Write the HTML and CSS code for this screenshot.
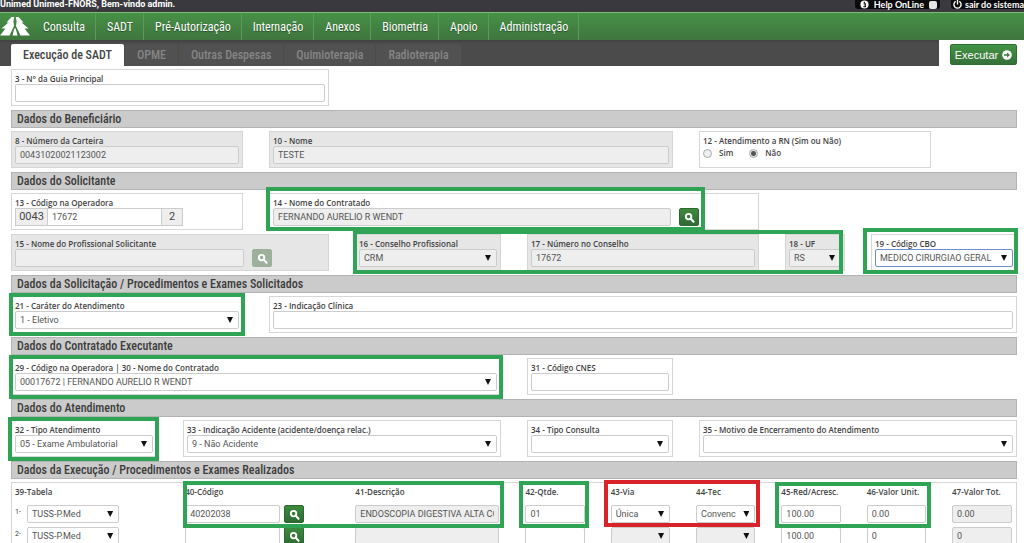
FILE: index.html
```html
<!DOCTYPE html>
<html lang="pt-BR">
<head>
<meta charset="utf-8">
<meta name="viewport" content="width=device-width, initial-scale=1">
<title>Execução de SADT</title>
<link rel="stylesheet" href="styles.css">
</head>
<body>
<svg class="sprite" aria-hidden="true">
  <symbol id="search" viewBox="0 0 12 12"><circle cx="5" cy="5" r="3" fill="none" stroke="currentColor" stroke-width="2"/><path d="M7.4 7.4 10.4 10.6" stroke="currentColor" stroke-width="2.2" stroke-linecap="round"/></symbol>
</svg>

<header class="topbar">
  <span class="welcome">Unimed Unimed-FNORS, Bem-vindo admin.</span>
  <div class="top-actions">
    <button class="top-button" type="button">
      <svg class="top-icon" viewBox="0 0 10 10" aria-hidden="true"><circle cx="5" cy="5" r="4.5" fill="#fff"/><path d="M4 4.2h1.800v3M3.700 7.500h3M4.800 2v1.200" stroke="#000" stroke-width="1.3" fill="none"/></svg>
      Help OnLine
      <span class="top-square"></span>
    </button>
    <button class="top-button top-exit" type="button">
      <svg class="top-icon" viewBox="0 0 10 10" aria-hidden="true"><path d="M3 1.6a4 4 0 1 0 4 0M5 0v5" stroke="#fff" stroke-width="1.5" fill="none"/></svg>
      sair do sistema
    </button>
  </div>
</header>

<nav class="menu">
  <svg class="logo" viewBox="0 0 30 19" aria-label="Unimed" role="img"><path fill="#fff" d="M11.500 0H14.200L13.400 4.500 14 9 9.500 18.500H0L5.500 11.500H1.500L8.500 5.500H6.500ZM15.800 0H18.500L23.500 5.500H21.500L28.500 11.500H24.500L30 18.500H20.500L16 9 16.600 4.500Z"/><path fill="#fff" d="M14.300 11.500H15.700L17.500 18.500H12.500Z"/></svg>
  <a href="#">Consulta</a>
  <a href="#">SADT</a>
  <a href="#">Pré-Autorização</a>
  <a href="#">Internação</a>
  <a href="#">Anexos</a>
  <a href="#">Biometria</a>
  <a href="#">Apoio</a>
  <a href="#">Administração</a>
</nav>

<div class="tabbar">
  <div class="tabs">
    <button class="tab active" type="button">Execução de SADT</button>
    <button class="tab" type="button">OPME</button>
    <button class="tab" type="button">Outras Despesas</button>
    <button class="tab" type="button">Quimioterapia</button>
    <button class="tab" type="button">Radioterapia</button>
  </div>
  <div class="run-area">
    <button class="run" type="button">Executar
      <svg class="run-icon" viewBox="0 0 10 10" aria-hidden="true"><circle cx="5" cy="5" r="4.800" fill="#fff"/><path d="M2 4.200h3V2.400L8 5 5 7.600V5.800H2Z" fill="#3d7e3d"/></svg>
    </button>
  </div>
</div>

<main class="form">
  <div class="row">
    <div class="field span-4"><label for="f3">3 - N° da Guia Principal</label><input id="f3" type="text"></div>
  </div>

  <h2>Dados do Beneficiário</h2>
  <div class="row">
    <div class="field locked span-3"><label for="f8">8 - Número da Carteira</label><input id="f8" type="text" value="00431020021123002" readonly></div>
    <div class="field locked span-5"><label for="f10">10 - Nome</label><input id="f10" type="text" value="TESTE" readonly></div>
    <fieldset class="field span-3">
      <legend>12 - Atendimento a RN (Sim ou Não)</legend>
      <div class="radios">
        <label><input type="radio" name="rn">Sim</label>
        <label><input type="radio" name="rn" checked>Não</label>
      </div>
    </fieldset>
  </div>

  <h2>Dados do Solicitante</h2>
  <div class="row">
    <div class="field span-3">
      <label for="f13">13 - Código na Operadora</label>
      <div class="group"><span class="addon">0043</span><input id="f13" type="text" value="17672"><span class="addon addon-end">2</span></div>
    </div>
    <div class="field span-6">
      <label for="f14">14 - Nome do Contratado</label>
      <div class="with-search name-search"><input id="f14" type="text" value="FERNANDO AURELIO R WENDT" readonly><button class="search" type="button" aria-label="Buscar"><svg><use href="#search"/></svg></button></div>
    </div>
    <span class="mark mark-name"></span>
  </div>
  <div class="row">
    <div class="field locked span-4">
      <label for="f15">15 - Nome do Profissional Solicitante</label>
      <div class="with-search prof-search"><input id="f15" type="text" readonly><button class="search off" type="button" aria-label="Buscar" disabled><svg><use href="#search"/></svg></button></div>
    </div>
    <div class="field locked span-2"><label for="f16">16 - Conselho Profissional</label><span class="pick"><select id="f16"><option>CRM</option></select></span></div>
    <div class="field locked span-3"><label for="f17">17 - Número no Conselho</label><input id="f17" type="text" value="17672" readonly></div>
    <div class="field locked span-1"><label for="f18">18 - UF</label><span class="pick"><select id="f18"><option>RS</option></select></span></div>
    <div class="field span-2"><label for="f19">19 - Código CBO</label><span class="pick focused"><select id="f19"><option>MEDICO CIRURGIAO GERAL</option></select></span></div>
    <span class="mark mark-council"></span>
    <span class="mark mark-cbo"></span>
  </div>

  <h2>Dados da Solicitação / Procedimentos e Exames Solicitados</h2>
  <div class="row">
    <div class="field span-3"><label for="f21">21 - Caráter do Atendimento</label><span class="pick"><select id="f21"><option>1 - Eletivo</option></select></span></div>
    <div class="field span-9"><label for="f23">23 - Indicação Clínica</label><input id="f23" type="text"></div>
    <span class="mark mark-3"></span>
  </div>

  <h2>Dados do Contratado Executante</h2>
  <div class="row">
    <div class="field span-6"><label for="f29">29 - Código na Operadora | 30 - Nome do Contratado</label><span class="pick"><select id="f29"><option>00017672 | FERNANDO AURELIO R WENDT</option></select></span></div>
    <div class="field span-2"><label for="f31">31 - Código CNES</label><input id="f31" type="text"></div>
    <span class="mark mark-6"></span>
  </div>

  <h2>Dados do Atendimento</h2>
  <div class="row">
    <div class="field span-2"><label for="f32">32 - Tipo Atendimento</label><span class="pick"><select id="f32"><option>05 - Exame Ambulatorial</option></select></span></div>
    <div class="field span-4"><label for="f33">33 - Indicação Acidente (acidente/doença relac.)</label><span class="pick"><select id="f33"><option>9 - Não Acidente</option></select></span></div>
    <div class="field span-2"><label for="f34">34 - Tipo Consulta</label><span class="pick"><select id="f34"><option></option></select></span></div>
    <div class="field span-4"><label for="f35">35 - Motivo de Encerramento do Atendimento</label><span class="pick"><select id="f35"><option></option></select></span></div>
    <span class="mark mark-2"></span>
  </div>

  <h2>Dados da Execução / Procedimentos e Exames Realizados</h2>
  <div class="procedures">
    <table>
      <colgroup><col class="c-wide"><col class="c-wide"><col class="c-wide"><col><col><col><col><col><col class="c-last"></colgroup>
      <thead>
        <tr><th>39-Tabela</th><th>40-Código</th><th>41-Descrição</th><th>42-Qtde.</th><th>43-Via</th><th>44-Tec</th><th>45-Red/Acresc.</th><th>46-Valor Unit.</th><th>47-Valor Tot.</th></tr>
      </thead>
      <tbody>
        <tr>
          <td><div class="table-pick"><span class="num">1-</span><span class="pick"><select aria-label="Tabela 1"><option>TUSS-P.Med</option></select></span></div></td>
          <td><div class="with-search code"><input type="text" value="40202038" aria-label="Código 1"><button class="search" type="button" aria-label="Buscar"><svg><use href="#search"/></svg></button></div></td>
          <td><input type="text" value="ENDOSCOPIA DIGESTIVA ALTA COM BIOPSIA" aria-label="Descrição 1" readonly></td>
          <td><input type="text" value="01" aria-label="Quantidade 1"></td>
          <td><span class="pick"><select aria-label="Via 1"><option>Única</option></select></span></td>
          <td><span class="pick"><select aria-label="Técnica 1"><option>Convenc</option></select></span></td>
          <td><input type="text" value="100.00" aria-label="Redução 1"></td>
          <td><input type="text" value="0.00" aria-label="Valor unitário 1"></td>
          <td><input type="text" value="0.00" aria-label="Valor total 1" readonly></td>
        </tr>
        <tr>
          <td><div class="table-pick"><span class="num">2-</span><span class="pick"><select aria-label="Tabela 2"><option>TUSS-P.Med</option></select></span></div></td>
          <td><div class="with-search code"><input type="text" aria-label="Código 2"><button class="search" type="button" aria-label="Buscar"><svg><use href="#search"/></svg></button></div></td>
          <td><input type="text" aria-label="Descrição 2" readonly></td>
          <td><input type="text" aria-label="Quantidade 2"></td>
          <td><span class="pick"><select aria-label="Via 2" disabled><option></option></select></span></td>
          <td><span class="pick"><select aria-label="Técnica 2" disabled><option></option></select></span></td>
          <td><input type="text" value="100.00" aria-label="Redução 2"></td>
          <td><input type="text" value="0" aria-label="Valor unitário 2"></td>
          <td><input type="text" value="0" aria-label="Valor total 2" readonly></td>
        </tr>
      </tbody>
    </table>
    <span class="box box-code"></span>
    <span class="box box-qty"></span>
    <span class="box box-via"></span>
    <span class="box box-value"></span>
  </div>
</main>
</body>
</html>
```

FILE: styles.css
```css
* { box-sizing: border-box; }

body {
  margin: 0;
  height: 100vh;
  overflow: hidden;
  background: #fff;
  color: #444;
  font-family: Roboto, "Liberation Sans", sans-serif;
  font-size: 9px;
}

button, input, select { font: inherit; color: inherit; margin: 0; }
.sprite { position: absolute; width: 0; height: 0; }

/* Top bar */
.topbar {
  display: flex;
  justify-content: space-between;
  height: 12px;
  background: #3a3a3e;
  color: #fff;
  font: bold 9px/9px Roboto, sans-serif;
  white-space: nowrap;
}
.top-actions { display: flex; gap: 11px; height: 9px; }
.top-button {
  display: flex;
  align-items: center;
  gap: 5px;
  padding: 0 3px 0 5px;
  border: 0;
  border-radius: 0 0 3px 3px;
  background: #0b0b0d;
  font: bold 9px/9px Lato, sans-serif;
}
.top-exit { gap: 3px; padding: 0 0 0 2px; border-radius: 0 0 0 3px; }
.top-icon { width: 9px; height: 9px; }
.top-square { width: 8px; height: 8px; border-radius: 2px; background: #e4e4e4; }

/* Main menu */
.menu {
  display: flex;
  align-items: stretch;
  height: 28px;
  border-top: 1px solid #7dbb7d;
  background: linear-gradient(#479147, #3f753f);
}
.logo { width: 30px; height: 19px; margin: 4px 2px 0 0; }
.menu a {
  display: flex;
  align-items: center;
  padding: 0 10px 0 11px;
  border-right: 1px solid #5b9a5b;
  color: #fff;
  font: 12px "Roboto Condensed", "Liberation Sans Narrow", Roboto, sans-serif;
  text-decoration: none;
  text-shadow: 0 1px 1px #264f26;
}

/* Tabs */
.tabbar { display: flex; height: 26px; }
.tabs {
  display: flex;
  align-items: flex-end;
  gap: 1px;
  flex: 1;
  padding-left: 11px;
  border-top: 2px solid #434343;
  background: #4b4b4b;
}
.tab {
  height: 22px;
  padding: 0 12px;
  border: 0;
  border-radius: 2px 2px 0 0;
  background: #515151;
  color: #858585;
  font: 500 12px "Roboto Condensed", "Liberation Sans Narrow", Roboto, sans-serif;
  white-space: nowrap;
}
.tab.active { background: #fff; color: #444; }
.run-area { width: 85px; padding: 4px 7px 0 11px; }
.run {
  display: flex;
  align-items: center;
  justify-content: center;
  gap: 4px;
  width: 100%;
  height: 21px;
  padding: 0;
  border: 1px solid #2f6e2f;
  border-radius: 2px;
  background: linear-gradient(#439343, #36703a);
  color: #fff;
  font: 11px "Liberation Sans", sans-serif;
}
.run-icon { width: 10px; height: 10px; }

/* Form */
.form { padding: 3px 7px 0 11px; }
.row {
  position: relative;
  display: grid;
  grid-template-columns: repeat(12, minmax(0, 1fr));
  column-gap: 26px;
  margin-bottom: 4px;
}
h2 {
  height: 18px;
  margin: 0 0 3px;
  padding-left: 5px;
  border: 1px solid #b3b3b3;
  background: #cbcbcb;
  color: #3c3c3c;
  font: 500 12px/16px "Roboto Condensed", "Liberation Sans Narrow", Roboto, sans-serif;
}
.field {
  min-width: 0;
  height: 37px;
  margin: 0;
  padding: 4px 3px 3px;
  border: 1px solid #d6d6d6;
}
.locked { background: #e6e6e6; }
.field > label, legend, th {
  display: block;
  height: 10px;
  padding: 0;
  color: #3f3f3f;
  font: 600 8px/10px "Open Sans", sans-serif;
  white-space: nowrap;
}
legend { float: left; width: 100%; }
.span-1 { grid-column: span 1; }
.span-2 { grid-column: span 2; }
.span-3 { grid-column: span 3; }
.span-4 { grid-column: span 4; }
.span-5 { grid-column: span 5; }
.span-6 { grid-column: span 6; }
.span-9 { grid-column: span 9; }

input[type="text"], select {
  display: block;
  width: 100%;
  min-width: 0;
  height: 18px;
  padding: 0 4px;
  border: 1px solid #ccc;
  border-radius: 2px;
  background: #fff;
  color: #555;
  line-height: 16px;
}
input[readonly], .locked select, select:disabled { background: #eee; opacity: 1; }
select { appearance: none; padding: 0 14px 0 4px; }
.pick { position: relative; display: block; width: 100%; }
.pick::after {
  content: "";
  position: absolute;
  top: 6px;
  right: 6px;
  width: 6px;
  height: 6px;
  background: #111;
  clip-path: polygon(0 0, 100% 0, 50% 100%);
  pointer-events: none;
}
.focused select { border-color: #6d8fcb; }

.radios { display: flex; gap: 16px; clear: both; }
.radios label { display: flex; align-items: center; gap: 7px; font: 600 8px/14px "Open Sans", sans-serif; }
.radios input {
  appearance: none;
  width: 9px;
  height: 9px;
  border: 1px solid #aaa;
  border-radius: 50%;
  background: #eee;
}
.radios input:checked { background: radial-gradient(circle, #555 2px, #e6e6e6 3px); }

.group { display: flex; width: 168px; }
.group input[type="text"] { flex: 1; border-radius: 0; }
.addon {
  width: 32px;
  height: 18px;
  border: 1px solid #ccc;
  border-right: 0;
  background: #eee;
  font-size: 11px;
  line-height: 16px;
  text-align: center;
}
.addon-end { width: 21px; border: 1px solid #ccc; border-left: 0; }

.with-search { display: flex; gap: 8px; }
.name-search { padding-right: 56px; }
.prof-search { padding-right: 53px; }
.search {
  display: flex;
  align-items: center;
  justify-content: center;
  flex: none;
  width: 20px;
  height: 18px;
  padding: 0;
  border: 1px solid #2d682f;
  border-radius: 2px;
  background: linear-gradient(#3d8a3f, #2f6b33);
  color: #fff;
}
.search svg { width: 11px; height: 11px; }
.search.off { border-color: #9cb09c; background: #9cb09c; }

/* Callout frames drawn over the fields */
.mark, .box { position: absolute; border: 4px solid #2fa455; pointer-events: none; }
.mark { grid-row: 1; z-index: 1; }
.mark-name { grid-column: 4 / span 6; inset: -6px 54px -1px -3px; }
.mark-council { grid-column: 5 / span 6; inset: -4px 2px -3px -2px; }
.mark-cbo { grid-column: 11 / span 2; inset: -6px -1px -3px -8px; }
.mark-3 { grid-column: 1 / span 3; inset: -3px -2px -3px; }
.mark-6 { grid-column: 1 / span 6; inset: -3px -2px -4px; }
.mark-2 { grid-column: 1 / span 2; inset: -3px -2px -4px -3px; }

/* Procedures */
.procedures { position: relative; border: 1px solid #d6d6d6; border-bottom: 0; padding: 4px 0 0 3px; }
table { width: 100%; table-layout: fixed; border-collapse: collapse; }
.c-wide { width: 17%; }
.c-last { width: 64px; }
th { display: table-cell; height: 18px; text-align: left; vertical-align: top; }
td { height: 22px; padding: 0 26px 0 0; vertical-align: top; }
td:last-child { padding-right: 4px; }
.table-pick { display: flex; gap: 4px; padding-right: 40px; }
.num { width: 8px; flex: none; font-size: 7px; line-height: 14px; }
.code { gap: 4px; padding-right: 25px; }
.code { margin-right: -26px; }
.box-code { top: -2px; left: 17%; width: 32%; height: 47px; }
.box-qty { top: -2px; left: 50.5%; width: 7%; height: 47px; }
.box-via { top: -3px; left: 59%; width: 15.5%; height: 47px; border-color: #d8232a; }
.box-value { top: -1px; left: 76%; width: 15.5%; height: 46px; }
.code { padding-right: 51px; }
```
